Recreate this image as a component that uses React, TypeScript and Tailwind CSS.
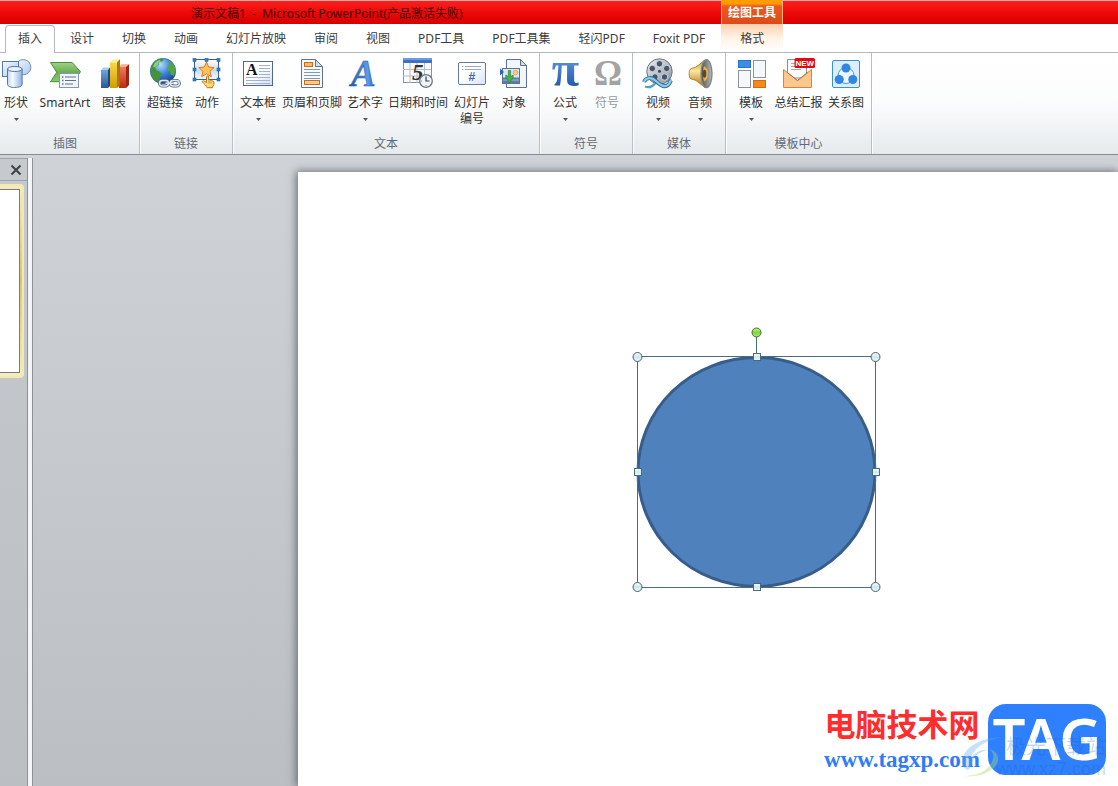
import type { ReactNode } from 'react';

const serif = 'Liberation Serif, serif';

const ShapesIcon = () => (
  <svg viewBox="0 0 32 32" className="h-8 w-8">
    <defs>
      <linearGradient id="shp" x1="0" y1="0" x2="1" y2="1">
        <stop offset="0" stopColor="#f4f9ff" />
        <stop offset="1" stopColor="#a9c8ee" />
      </linearGradient>
      <linearGradient id="cyl" x1="0" y1="0" x2="1" y2="0">
        <stop offset="0" stopColor="#bcd6f5" />
        <stop offset="0.35" stopColor="#f5faff" />
        <stop offset="1" stopColor="#8db3e3" />
      </linearGradient>
    </defs>
    <circle cx="23.3" cy="9.2" r="7.6" fill="url(#shp)" stroke="#7290b8" />
    <rect x="2.5" y="3.5" width="16" height="15" fill="url(#shp)" stroke="#5678a8" />
    <path d="M7.5 11v15.5c0 1.7 3.3 3 7.3 3s7.3-1.3 7.3-3V11z" fill="url(#cyl)" stroke="#5678a8" />
    <ellipse cx="14.8" cy="11" rx="7.3" ry="2.5" fill="#eaf3ff" stroke="#5678a8" />
  </svg>
);

const SmartArtIcon = () => (
  <svg viewBox="0 0 32 32" className="h-8 w-8">
    <defs>
      <linearGradient id="sma" x1="0" y1="0" x2="0" y2="1">
        <stop offset="0" stopColor="#a3d08b" />
        <stop offset="0.5" stopColor="#68b04e" />
        <stop offset="1" stopColor="#8cc976" />
      </linearGradient>
    </defs>
    <path d="M1.5 4.5h21.7l8.3 9.2-7 10H1.5l6.2-9.4z" fill="url(#sma)" stroke="#4d8d3c" />
    <rect x="10.5" y="15.5" width="19" height="14" fill="#f1f5fa" stroke="#8496b2" />
    <path d="M16 19h11M16 22.5h11M16 26h8" stroke="#5f7391" strokeWidth="1.2" />
    <path d="M13 19h1.5M13 22.5h1.5M13 26h1.5" stroke="#5f7391" strokeWidth="1.3" />
  </svg>
);

const ChartIcon = () => (
  <svg viewBox="0 0 32 32" className="h-8 w-8">
    <defs>
      <linearGradient id="cb" x1="0" y1="0" x2="0" y2="1">
        <stop offset="0" stopColor="#6fa5da" />
        <stop offset="1" stopColor="#235a98" />
      </linearGradient>
      <linearGradient id="cy" x1="0" y1="0" x2="0" y2="1">
        <stop offset="0" stopColor="#f7d94a" />
        <stop offset="1" stopColor="#d39b00" />
      </linearGradient>
      <linearGradient id="cr" x1="0" y1="0" x2="0" y2="1">
        <stop offset="0" stopColor="#ef7a5c" />
        <stop offset="1" stopColor="#bd2a10" />
      </linearGradient>
    </defs>
    <path d="M3 12h7v18H3z" fill="url(#cb)" />
    <path d="M3 12l2.5-2.5H12L10 12z" fill="#a9cdf0" />
    <path d="M10 12l2-2.5V28l-2 2z" fill="#1d477c" />
    <path d="M21 9h7v21h-7z" fill="url(#cr)" />
    <path d="M21 9l2.5-2.7H31L28 9z" fill="#f9ab93" />
    <path d="M28 9l3-2.7V27l-3 3z" fill="#9c2412" />
    <path d="M12 4.3h7V30h-7z" fill="url(#cy)" />
    <path d="M12 4.3l3-3h7l-3 3z" fill="#fdee9b" />
    <path d="M19 4.3l3-3V27l-3 3z" fill="#a87b00" />
  </svg>
);

const GlobeIcon = () => (
  <svg viewBox="0 0 32 32" className="h-8 w-8">
    <defs>
      <radialGradient id="gl" cx="0.4" cy="0.25" r="0.8">
        <stop offset="0" stopColor="#b2dcfc" />
        <stop offset="0.5" stopColor="#3a82d6" />
        <stop offset="1" stopColor="#10398a" />
      </radialGradient>
    </defs>
    <circle cx="14" cy="13" r="12.7" fill="url(#gl)" stroke="#24559a" strokeWidth="0.6" />
    <path d="M2.5 8C5 3.5 8 1.5 12 .7l3 .8-2 2-3 .5-.5 3-3.5 2.5L7 12l3.5 1.5 2.5 3-2 3.5-1 4.5C5 23 1.5 18 1.5 13z" fill="#43933a" />
    <path d="M6 4.5l4-2.5 2 1-2.5 1.5-1 3-3.5 2-1-1z" fill="#8cd07c" />
    <path d="M20 2.5c4 2 6.5 6 6.5 10.5l-1.5 5-3.5-1.5-.5-3.5-3-1 .5-3L21 6z" fill="#52a544" />
    <g fill="none" stroke="#59677c" strokeWidth="3.2">
      <rect x="10.5" y="22.5" width="9" height="5.5" rx="2.7" />
      <rect x="21.3" y="22.5" width="9" height="5.5" rx="2.7" />
      <path d="M16.5 25.3h8" />
    </g>
    <g fill="none" stroke="#dfe6ef" strokeWidth="1.5">
      <rect x="10.5" y="22.5" width="9" height="5.5" rx="2.7" />
      <rect x="21.3" y="22.5" width="9" height="5.5" rx="2.7" />
      <path d="M16.5 25.3h8" />
    </g>
  </svg>
);

const ActionIcon = () => (
  <svg viewBox="0 0 32 32" className="h-8 w-8">
    <defs>
      <linearGradient id="act" x1="0" y1="0" x2="0" y2="1">
        <stop offset="0" stopColor="#ffffff" />
        <stop offset="0.55" stopColor="#c9dff0" />
        <stop offset="1" stopColor="#f4f9fd" />
      </linearGradient>
    </defs>
    <rect x="3.5" y="1.5" width="24" height="20" fill="url(#act)" stroke="#3c5f8c" />
    <path d="M15.5 4l2.2 5.1 5.5.5-4.2 3.7 1.3 5.4-4.8-2.9-4.8 2.9 1.3-5.4-4.2-3.7 5.5-.5z" fill="#fdc455" stroke="#e07a1c" />
    <g fill="#2f83c6" stroke="#1c62a0" strokeWidth="0.6">
      <rect x="2" y="0.5" width="3" height="3" />
      <rect x="14" y="0.5" width="3" height="3" />
      <rect x="26" y="0.5" width="3" height="3" />
      <rect x="2" y="10" width="3" height="3" />
      <rect x="26" y="10" width="3" height="3" />
      <rect x="2" y="20" width="3" height="3" />
      <rect x="26" y="20" width="3" height="3" />
    </g>
    <path d="M15.5 19c0-1.5 2.2-1.5 2.2 0v3.2c.6-.6 1.8-.5 2 .3.7-.4 1.6-.1 1.7.6.8-.2 1.5.2 1.5 1v2.2c0 1.2-1.4 1.7-1.4 3.4h-5.3c-.6-2-3-3.6-4.7-5.6-.7-1 .6-1.8 1.6-1.1l2.4 1.5z" fill="#ffd978" stroke="#a96f12" strokeWidth="0.9" />
    <path d="M18 23v2.5M20 23.5v2" stroke="#a96f12" strokeWidth="0.7" />
  </svg>
);

const TextBoxIcon = () => (
  <svg viewBox="0 0 32 32" className="h-8 w-8">
    <defs>
      <linearGradient id="tb" x1="0" y1="0" x2="1" y2="1">
        <stop offset="0.5" stopColor="#ffffff" />
        <stop offset="1" stopColor="#cfdcf0" />
      </linearGradient>
    </defs>
    <rect x="1.5" y="3.5" width="29" height="24" fill="url(#tb)" stroke="#55688a" />
    <path d="M17 7.5h11M17 10.5h11M17 13.5h11M17 16.5h11M4 19.5h24M4 22.5h24M4 25.5h24" stroke="#9fb3d3" />
    <text x="4" y="17" fontFamily={serif} fontSize="16" fontWeight="bold" fill="#111">A</text>
  </svg>
);

const HeaderFooterIcon = () => (
  <svg viewBox="0 0 32 32" className="h-8 w-8">
    <path d="M5.5 1.5h14l7 7v21h-21z" fill="#f5f8fd" stroke="#62738f" />
    <path d="M19.5 1.5v7h7z" fill="#d4deec" stroke="#62738f" />
    <rect x="8.5" y="4.5" width="8" height="4" fill="#fbb864" stroke="#c3701a" />
    <path d="M8 11.5h16M8 14.5h16M8 17.5h16M8 20.5h16" stroke="#8495b1" />
    <rect x="8.5" y="22.5" width="15" height="4" fill="#fdc98a" stroke="#c3701a" />
  </svg>
);

const WordArtIcon = () => (
  <svg viewBox="0 0 32 32" className="h-8 w-8 overflow-visible">
    <defs>
      <linearGradient id="wa" x1="0" y1="0" x2="1" y2="0">
        <stop offset="0" stopColor="#1f57ac" />
        <stop offset="0.7" stopColor="#5d9be8" />
        <stop offset="1" stopColor="#2a61b5" />
      </linearGradient>
    </defs>
    <text x="2" y="28" fontFamily={serif} fontSize="37" fontWeight="bold" fontStyle="italic" fill="url(#wa)" stroke="#1d4f9e" strokeWidth="0.5">A</text>
  </svg>
);

const DateIcon = () => (
  <svg viewBox="0 0 32 32" className="h-8 w-8">
    <rect x="1.5" y="0.5" width="28" height="24" fill="#fbfcfe" stroke="#8393ac" />
    <path d="M1 0h29v5H1z" fill="#3e72c4" />
    <path d="M1 0h29v2H1z" fill="#6f9ce0" />
    <path d="M1 11.5h28M1 18h28M8 5v20M15 5v20M22.5 5v20" stroke="#b3bdcc" />
    <text x="10" y="22" fontFamily={serif} fontSize="23" fontWeight="bold" fontStyle="italic" fill="#333">5</text>
    <circle cx="24" cy="23" r="6.3" fill="#f2f6fb" stroke="#69788e" strokeWidth="1.3" />
    <path d="M24 18.5V23h3.500" fill="none" stroke="#2f3c50" strokeWidth="1.2" />
    <path d="M24 27v1M19 23h1" stroke="#69788e" />
  </svg>
);

const SlideNumberIcon = () => (
  <svg viewBox="0 0 32 32" className="h-8 w-8">
    <defs>
      <linearGradient id="sn" x1="0" y1="0" x2="1" y2="1">
        <stop offset="0.4" stopColor="#ffffff" />
        <stop offset="1" stopColor="#d7e3f3" />
      </linearGradient>
    </defs>
    <rect x="2.5" y="4.5" width="27" height="22" rx="1.5" fill="url(#sn)" stroke="#66799a" />
    <path d="M9 8.5h16M9 11.5h16M6 8.5h1.5M6 11.5h1.5" stroke="#9aa9c1" />
    <text x="12.5" y="23" fontFamily="Liberation Sans, sans-serif" fontSize="12" fontWeight="bold" fill="#3d69ad">#</text>
  </svg>
);

const ObjectIcon = () => (
  <svg viewBox="0 0 32 32" className="h-8 w-8">
    <path d="M8.5 1.5h14l6 6v22h-20z" fill="#f2f6fc" stroke="#5f7190" />
    <path d="M22.5 1.5v6h6z" fill="#cfdaea" stroke="#5f7190" />
    <rect x="4.5" y="10.5" width="17" height="15" fill="#d9e9f8" stroke="#5f7190" />
    <path d="M5 19.5h16v5.5H5z" fill="#5b7ea8" />
    <path d="M5 22h16" stroke="#9bb7d4" />
    <circle cx="17.5" cy="14.5" r="2.4" fill="#fbc978" stroke="#d29540" strokeWidth="0.6" />
    <path d="M2 10.5l4 3.5-4 3.5z" fill="#2f62c0" />
    <path d="M10.3 12.5h2.4v6l2.5-1.5v2.8l-3.7 4.7-3.7-4.7V17l2.5 1.5z" fill="#46b04b" stroke="#257c2c" strokeWidth="0.6" />
  </svg>
);

const EquationIcon = () => (
  <svg viewBox="0 0 32 32" className="h-8 w-8 overflow-visible">
    <defs>
      <linearGradient id="pi" x1="0" y1="0" x2="0" y2="1">
        <stop offset="0.3" stopColor="#5b95e0" />
        <stop offset="0.9" stopColor="#1c4f9f" />
      </linearGradient>
    </defs>
    <text x="16.5" y="28" textAnchor="middle" fontFamily={serif} fontSize="50" fontWeight="bold" fill="url(#pi)">π</text>
  </svg>
);

const SymbolIcon = () => (
  <svg viewBox="0 0 32 32" className="h-8 w-8 overflow-visible">
    <text x="17" y="27" textAnchor="middle" fontFamily={serif} fontSize="35" fontWeight="bold" fill="#a3a3a3">Ω</text>
  </svg>
);

const VideoIcon = () => (
  <svg viewBox="0 0 32 32" className="h-8 w-8">
    <defs>
      <linearGradient id="reel" x1="0" y1="0" x2="1" y2="1">
        <stop offset="0" stopColor="#eef1f4" />
        <stop offset="1" stopColor="#8b949f" />
      </linearGradient>
    </defs>
    <circle cx="17.5" cy="13.5" r="12.7" fill="url(#reel)" stroke="#69737f" />
    <g fill="#46556a" stroke="#dfe4ea" strokeWidth="0.8">
      <circle cx="17.5" cy="5.8" r="3.2" />
      <circle cx="24.7" cy="10.5" r="3.2" />
      <circle cx="22.5" cy="19" r="3.2" />
      <circle cx="13" cy="19" r="3.2" />
      <circle cx="10.3" cy="10.5" r="3.2" />
    </g>
    <circle cx="17.5" cy="13.3" r="1.5" fill="#39475a" />
    <path d="M2 24c2-5 8-5 12-1s9 7 12.5 3.500c1.700-2 1.500-3.500 3-4.500" fill="none" stroke="#2f6d96" strokeWidth="4" />
    <path d="M2 24c2-5 8-5 12-1s9 7 12.500 3.500c1.700-2 1.500-3.500 3-4.500" fill="none" stroke="#8ecbe8" strokeWidth="2.2" />
    <path d="M3 28.5c4 1.5 7 1 10-3" fill="none" stroke="#5aa0c4" strokeWidth="2.2" />
  </svg>
);

const AudioIcon = () => (
  <svg viewBox="0 0 32 32" className="h-8 w-8">
    <defs>
      <linearGradient id="horn" x1="0" y1="0" x2="0" y2="1">
        <stop offset="0" stopColor="#c8922a" />
        <stop offset="0.4" stopColor="#ffe79a" />
        <stop offset="1" stopColor="#a86d10" />
      </linearGradient>
      <linearGradient id="cone" x1="0" y1="0" x2="1" y2="0">
        <stop offset="0" stopColor="#4c4c4c" />
        <stop offset="1" stopColor="#b9bcc0" />
      </linearGradient>
    </defs>
    <path d="M6 11.5c1-1.5 4-1.5 6-2.5L21 2v27.5l-9-7c-2-1-5-.8-6-2.5-1.2-2.5-1.2-6 0-8.5z" fill="url(#horn)" stroke="#94651a" strokeWidth="0.7" />
    <ellipse cx="22.5" cy="15.7" rx="5.5" ry="14" fill="url(#cone)" stroke="#80848a" strokeWidth="1.3" />
    <path d="M20 8c3 1.5 4 4.5 4 7.7s-1 6.5-4 7.8c-1.3-4-1.3-11.5 0-15.5z" fill="#e4b34c" />
    <ellipse cx="20.5" cy="15.7" rx="1.8" ry="4" fill="#5a4a2a" />
  </svg>
);

const TemplateIcon = () => (
  <svg viewBox="0 0 32 32" className="h-8 w-8">
    <rect x="3.5" y="2.5" width="12" height="7" fill="#3a8ee6" stroke="#2474c8" />
    <rect x="18.5" y="2.5" width="12" height="17" fill="#f6f7f8" stroke="#8d9299" />
    <rect x="3.5" y="12.5" width="12" height="17" fill="#f6f7f8" stroke="#8d9299" />
    <rect x="18.5" y="22.5" width="12" height="7" fill="#f58a1c" stroke="#d56d06" />
  </svg>
);

const ReportIcon = () => (
  <svg viewBox="0 0 32 32" className="h-8 w-8">
    <path d="M4.5 1.5h19V20h-19z" fill="#fafafa" stroke="#a0887a" />
    <path d="M8 5.5h5M8 8.5h5M8 11.5h10" stroke="#a8a8a8" />
    <path d="M.5 11.5L14.5 22.5 28.5 11.5v18H.5z" fill="#fbc78d" stroke="#cf8745" />
    <path d="M4.5 14.7L14.5 22.5 24.5 14.7" fill="none" stroke="#a27650" />
    <rect x="11.5" y="0" width="20.5" height="10" rx="1.5" fill="#dc0b14" />
    <text x="21.8" y="8" textAnchor="middle" fontFamily="Liberation Sans, sans-serif" fontSize="8" fontWeight="bold" fill="#fff">NEW</text>
  </svg>
);

const RelationIcon = () => (
  <svg viewBox="0 0 32 32" className="h-8 w-8">
    <rect x="2.5" y="2.5" width="27" height="27" rx="1.5" fill="#dceefc" stroke="#3d8fd0" />
    <circle cx="16" cy="17.5" r="8" fill="#eef7ff" stroke="#4598dc" />
    <g fill="#2f86e4">
      <circle cx="16" cy="10" r="4.5" />
      <circle cx="9.2" cy="21.5" r="4.5" />
      <circle cx="22.8" cy="21.5" r="4.5" />
    </g>
  </svg>
);

type Tool = {
  label: string;
  second?: string;
  icon: ReactNode;
  width: string;
  menu?: boolean;
  disabled?: boolean;
};

const groups: { name: string; tools: Tool[] }[] = [
  {
    name: '插图',
    tools: [
      { label: '形状', icon: <ShapesIcon />, width: 'w-[42px]', menu: true },
      { label: 'SmartArt', icon: <SmartArtIcon />, width: 'w-14' },
      { label: '图表', icon: <ChartIcon />, width: 'w-[42px]' },
    ],
  },
  {
    name: '链接',
    tools: [
      { label: '超链接', icon: <GlobeIcon />, width: 'w-[42px]' },
      { label: '动作', icon: <ActionIcon />, width: 'w-[42px]' },
    ],
  },
  {
    name: '文本',
    tools: [
      { label: '文本框', icon: <TextBoxIcon />, width: 'w-[42px]', menu: true },
      { label: '页眉和页脚', icon: <HeaderFooterIcon />, width: 'w-[66px]' },
      { label: '艺术字', icon: <WordArtIcon />, width: 'w-10', menu: true },
      { label: '日期和时间', icon: <DateIcon />, width: 'w-[66px]' },
      { label: '幻灯片', second: '编号', icon: <SlideNumberIcon />, width: 'w-[42px]' },
      { label: '对象', icon: <ObjectIcon />, width: 'w-[42px]' },
    ],
  },
  {
    name: '符号',
    tools: [
      { label: '公式', icon: <EquationIcon />, width: 'w-[42px]', menu: true },
      { label: '符号', icon: <SymbolIcon />, width: 'w-[42px]', disabled: true },
    ],
  },
  {
    name: '媒体',
    tools: [
      { label: '视频', icon: <VideoIcon />, width: 'w-[42px]', menu: true },
      { label: '音频', icon: <AudioIcon />, width: 'w-[42px]', menu: true },
    ],
  },
  {
    name: '模板中心',
    tools: [
      { label: '模板', icon: <TemplateIcon />, width: 'w-[42px]', menu: true },
      { label: '总结汇报', icon: <ReportIcon />, width: 'w-[53px]' },
      { label: '关系图', icon: <RelationIcon />, width: 'w-[42px]' },
    ],
  },
];

const tabs = ['插入', '设计', '切换', '动画', '幻灯片放映', '审阅', '视图', 'PDF工具', 'PDF工具集', '轻闪PDF', 'Foxit PDF'];

function ToolButton({ tool }: { tool: Tool }) {
  return (
    <button
      type="button"
      disabled={tool.disabled}
      className={`flex shrink-0 flex-col items-center whitespace-nowrap pt-[5px] leading-4 ${tool.width} ${tool.disabled ? 'text-[#9a9a9a]' : 'text-[#333333]'}`}
    >
      {tool.icon}
      <span className="mt-[5px]">{tool.label}</span>
      {tool.second && <span>{tool.second}</span>}
      {tool.menu && (
        <span className="flex h-4 items-center">
          <svg viewBox="0 0 5 3" className="h-[3px] w-[5px]">
            <path d="M0 0h5L2.5 3z" fill="#555" />
          </svg>
        </span>
      )}
    </button>
  );
}

function Ribbon() {
  return (
    <div className="flex h-[102px] shrink-0 border-b border-[#868b91] bg-gradient-to-b from-white via-[#fbfcfc] to-[#e6eaed]">
      {groups.map((group, i) => (
        <section
          key={group.name}
          aria-label={group.name}
          className={`flex shrink-0 flex-col justify-between border-r border-[#b9bec4] px-1 shadow-[1px_0_0_#ffffff] ${i === 0 ? '-ml-[9px]' : ''}`}
        >
          <div className="flex items-start">
            {group.tools.map((tool) => (
              <ToolButton key={tool.label} tool={tool} />
            ))}
          </div>
          <p className="pb-0.5 text-center leading-4 text-[#626a76]">{group.name}</p>
        </section>
      ))}
    </div>
  );
}

function SelectedCircle() {
  const corners = [[8, 33], [246, 33], [8, 263], [246, 263]];
  const sides = [[127, 33], [8, 148], [246, 148], [127, 263]];
  return (
    <svg viewBox="0 0 254 272" className="absolute left-[331px] top-[152px] h-[272px] w-[254px]">
      <defs>
        <linearGradient id="handle" x1="0" y1="0" x2="0" y2="1">
          <stop offset="0" stopColor="#ffffff" />
          <stop offset="0.5" stopColor="#c9e8ee" />
          <stop offset="1" stopColor="#f3fcfd" />
        </linearGradient>
        <linearGradient id="rotate" x1="0" y1="0" x2="0" y2="1">
          <stop offset="0" stopColor="#c6f58f" />
          <stop offset="0.5" stopColor="#7ed63b" />
          <stop offset="1" stopColor="#a9ef62" />
        </linearGradient>
      </defs>
      <ellipse cx="127.5" cy="148" rx="118.5" ry="114.5" fill="#4f81bd" stroke="#385d8a" strokeWidth="3" />
      <rect x="8.5" y="32.5" width="238" height="231" fill="none" stroke="#4b6b80" />
      <path d="M127.5 12v20" stroke="#4b6b80" />
      <circle cx="127.5" cy="8.5" r="4.5" fill="url(#rotate)" stroke="#486b3a" />
      {corners.map(([x, y]) => (
        <circle key={`${x}-${y}`} cx={x + 0.5} cy={y} r="4.5" fill="url(#handle)" stroke="#4b5f6b" />
      ))}
      {sides.map(([x, y]) => (
        <rect key={`${x}-${y}`} x={x - 2.5} y={y - 3.5} width="7" height="7" fill="url(#handle)" stroke="#4b6b80" />
      ))}
    </svg>
  );
}

function SiteMark() {
  return (
    <div className="absolute bottom-2 right-3 flex items-start gap-2">
      <div className="flex flex-col items-center whitespace-nowrap pt-0.5">
        <p className="text-[31px] font-bold leading-9 text-[#ff2d2d]">电脑技术网</p>
        <a href="#" className="font-['Liberation_Serif',serif] text-[23px] font-bold leading-9 text-[#2f7df6]">
          www.tagxp.com
        </a>
      </div>
      <div className="relative flex h-[71px] w-[118px] items-center justify-center rounded-[18px] bg-[#2e80ff]">
        <span className="pb-1 font-['Noto_Sans',sans-serif] text-[58px] font-semibold leading-none text-white">TAG</span>
        <div className="absolute -bottom-1 right-0 flex flex-col whitespace-nowrap text-right text-[#1a5fc4]/25">
          <span className="text-xl leading-6">极光下载站</span>
          <span className="font-['Liberation_Sans',sans-serif] text-lg leading-5">www.xz7.com</span>
        </div>
      </div>
      <svg viewBox="0 0 48 42" className="absolute bottom-0 left-[137px] h-[42px] w-12">
        <path d="M1 24C4 10 20 2 40 1 24 5 12 12 9 24c4-8 12-11 19-10-8 1-15 5-17 13-1 3-2 6-4 7-4-1-6-5-6-10z" fill="#5ca8ee" opacity="0.35" />
        <path d="M3 40c14 0 27-6 29-18 1-4-1-7-4-9 6 1 10 6 9 12C35 35 18 42 3 40z" fill="#a6d86a" opacity="0.4" />
      </svg>
    </div>
  );
}

export default function App() {
  return (
    <div className="flex h-screen flex-col overflow-hidden bg-white font-['Noto_Sans','Noto_Sans_CJK_SC',sans-serif] text-xs">
      <header className="flex h-6 shrink-0 border-t border-[#f3a9a0] bg-gradient-to-b from-[#fb1e1c] via-[#ec0a08] to-[#d60000]">
        <h1 className="w-[721px] shrink-0 whitespace-pre pl-[191px] leading-[26px] text-[#4a0000]">
          {'演示文稿1  -  Microsoft PowerPoint(产品激活失败)'}
        </h1>
        <div className="-mt-px w-[62px] shrink-0 border-x border-[#f7b07e] bg-gradient-to-b from-[#ff9c00] from-15% via-[#ee5a1c] via-25% to-[#dc4a18] text-center font-bold leading-[26px] text-white">
          绘图工具
        </div>
      </header>

      <nav className="flex h-[29px] shrink-0 items-end border-b border-[#b5b9be] bg-white pl-[5px] text-[#3c3c3c]">
        {tabs.map((tab, i) =>
          i === 0 ? (
            <button
              key={tab}
              type="button"
              aria-current="page"
              className="-mb-px mr-px h-7 shrink-0 whitespace-nowrap rounded-t-sm border border-b-0 border-[#b5b9be] bg-white px-3 pb-0.5"
            >
              {tab}
            </button>
          ) : (
            <button key={tab} type="button" className="h-7 shrink-0 whitespace-nowrap px-[14px] pt-0.5">
              {tab}
            </button>
          ),
        )}
        <button
          type="button"
          className="ml-0.5 h-full w-[62px] shrink-0 bg-gradient-to-b from-[#fbd0b0] via-[#fff3e6] to-white pt-0.5"
        >
          格式
        </button>
      </nav>

      <Ribbon />

      <main className="flex min-h-0 flex-1 bg-gradient-to-b from-[#cfd3d8] to-[#bbbec2] pt-[3px]">
        <aside className="flex w-7 shrink-0 flex-col border-r border-[#8d9298] bg-gradient-to-b from-[#c6cacf] to-[#bbbec2]">
          <div className="flex h-[23px] items-center justify-end border-b border-t border-[#9ea3a9] pr-[5px]">
            <button type="button" aria-label="关闭">
              <svg viewBox="0 0 12 12" className="h-3 w-3">
                <path d="M1.5 1.5l9 9M10.5 1.5l-9 9" stroke="#3f4348" strokeWidth="2" />
              </svg>
            </button>
          </div>
          <div className="mr-[3px] mt-[3px] h-[194px] rounded-r-sm border-2 border-l-0 border-[#f3e9a8] bg-gradient-to-b from-[#f3ebc4] via-[#dcc274] to-[#f3ebc4] py-[3px] pr-0.5">
            <div className="h-full border border-l-0 border-[#7c7c74] bg-white" />
          </div>
        </aside>
        <div className="w-[5px] shrink-0 border-r border-[#8d9298] bg-[#f3f5f6]" />

        <div className="flex min-w-0 flex-1 pl-[265px] pt-3.5">
          <div className="relative flex-1 bg-white shadow-[-1px_0_8px_1px_rgba(70,74,80,0.7)]">
            <SelectedCircle />
            <SiteMark />
          </div>
        </div>
      </main>
    </div>
  );
}
